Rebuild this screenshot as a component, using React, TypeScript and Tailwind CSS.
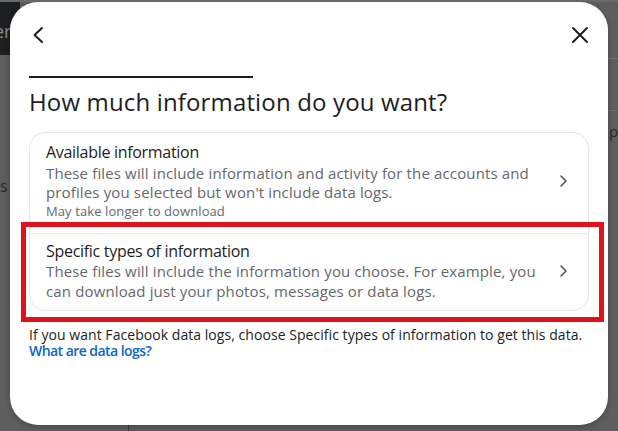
import { ReactNode } from 'react'

const font = { fontFamily: '"Open Sans", "Noto Sans", Arial, sans-serif' }

function Chevron() {
  return (
    <svg width="10" height="14" viewBox="0 0 10 14" fill="none" className="shrink-0">
      <path d="M3 2l5 5-5 5" stroke="#4b4f56" strokeWidth="1.5" strokeLinecap="round" strokeLinejoin="round" />
    </svg>
  )
}

function Option({ title, desc, note, last }: { title: string; desc: ReactNode; note?: string; last?: boolean }) {
  return (
    <div className={`flex items-center gap-4 pl-4 pr-5 ${last ? 'pt-[7px] pb-[9px]' : 'pt-[9px] pb-[13px] border-b border-[#e4e6eb]'}`}>
      <div className="flex-1">
        <div className="text-[16px] leading-[20px] tracking-[-0.3px] text-[#1c1e21]">{title}</div>
        <div className="text-[15px] leading-[19.5px] tracking-[0.14px] text-[#65676b] mt-[1.5px]">{desc}</div>
        {note && <div className="text-[13px] leading-[17px] tracking-[0.1px] text-[#65676b]">{note}</div>}
      </div>
      <Chevron />
    </div>
  )
}

export default function App() {
  return (
    <div className="relative w-[618px] h-[431px] overflow-hidden bg-[#5e5e5e]" style={font}>
      {/* page behind the overlay */}
      <div className="absolute left-0 top-[2px] w-[20px] h-[53px] bg-[#1d1f22] overflow-hidden">
        <span className="block pt-[16px] -ml-[6px] text-[18px] text-[#8a8d91]">er</span>
      </div>
      <div className="absolute inset-x-0 top-0 h-[2px] bg-[#6a6a6a]" />
      <span className="absolute left-0 top-[174px] text-[16px] text-[#2a2a2a]">s</span>
      <div className="absolute right-0 top-[58px] w-[10px] h-[53px] border-y border-[#707070]" />
      <span className="absolute left-[609px] top-[120px] text-[15px] text-[#2a2a2a]">p</span>
      <div className="absolute left-[128px] bottom-0 w-px h-[6px] bg-[#3a3a3a]" />

      {/* modal */}
      <div className="absolute left-[10px] top-[2px] w-[598px] h-[423px] rounded-[28px] bg-white shadow-[0_2px_6px_rgba(0,0,0,0.25)] flex flex-col pt-[23px] px-[19px]">
        <div className="h-[20px] flex items-center justify-between">
          <svg width="16" height="18" viewBox="0 0 16 18" fill="none" className="ml-[1px]">
            <path d="M12 2L4.5 9l7.5 7" stroke="#1c1e21" strokeWidth="2" strokeLinecap="round" strokeLinejoin="round" />
          </svg>
          <svg width="18" height="18" viewBox="0 0 18 18" fill="none">
            <path d="M2 2l14 14M16 2L2 16" stroke="#1c1e21" strokeWidth="2" strokeLinecap="round" />
          </svg>
        </div>
        <div className="mt-[31px] h-[2px] w-[224px] bg-[#1c1e21]" />
        <h1 className="mt-[8px] text-[24px] leading-[32px] text-[#1c1e21] tracking-[0.15px]">How much information do you want?</h1>

        <div className="mt-[14px] border border-[#e4e6eb] rounded-[16px]">
          <Option
            title="Available information"
            desc={<>These files will include information and activity for the accounts and<br />profiles you selected but won't include data logs.</>}
            note="May take longer to download"
          />
          <Option
            last
            title="Specific types of information"
            desc={<>These files will include the information you choose. For example, you<br />can download just your photos, messages or data logs.</>}
          />
        </div>

        <div className="mt-[16px] text-[14px] leading-[16px] tracking-[0.05px] text-[#1c1e21]">
          If you want Facebook data logs, choose Specific types of information to get this data.
        </div>
        <div className="text-[14px] leading-[16px] font-semibold tracking-[-0.55px] text-[#0a66c8]">What are data logs?</div>
      </div>

      {/* red highlight annotation */}
      <div className="absolute left-[21px] top-[222px] w-[583px] h-[100px] border-[5px] border-[#e0121c]" />
    </div>
  )
}
